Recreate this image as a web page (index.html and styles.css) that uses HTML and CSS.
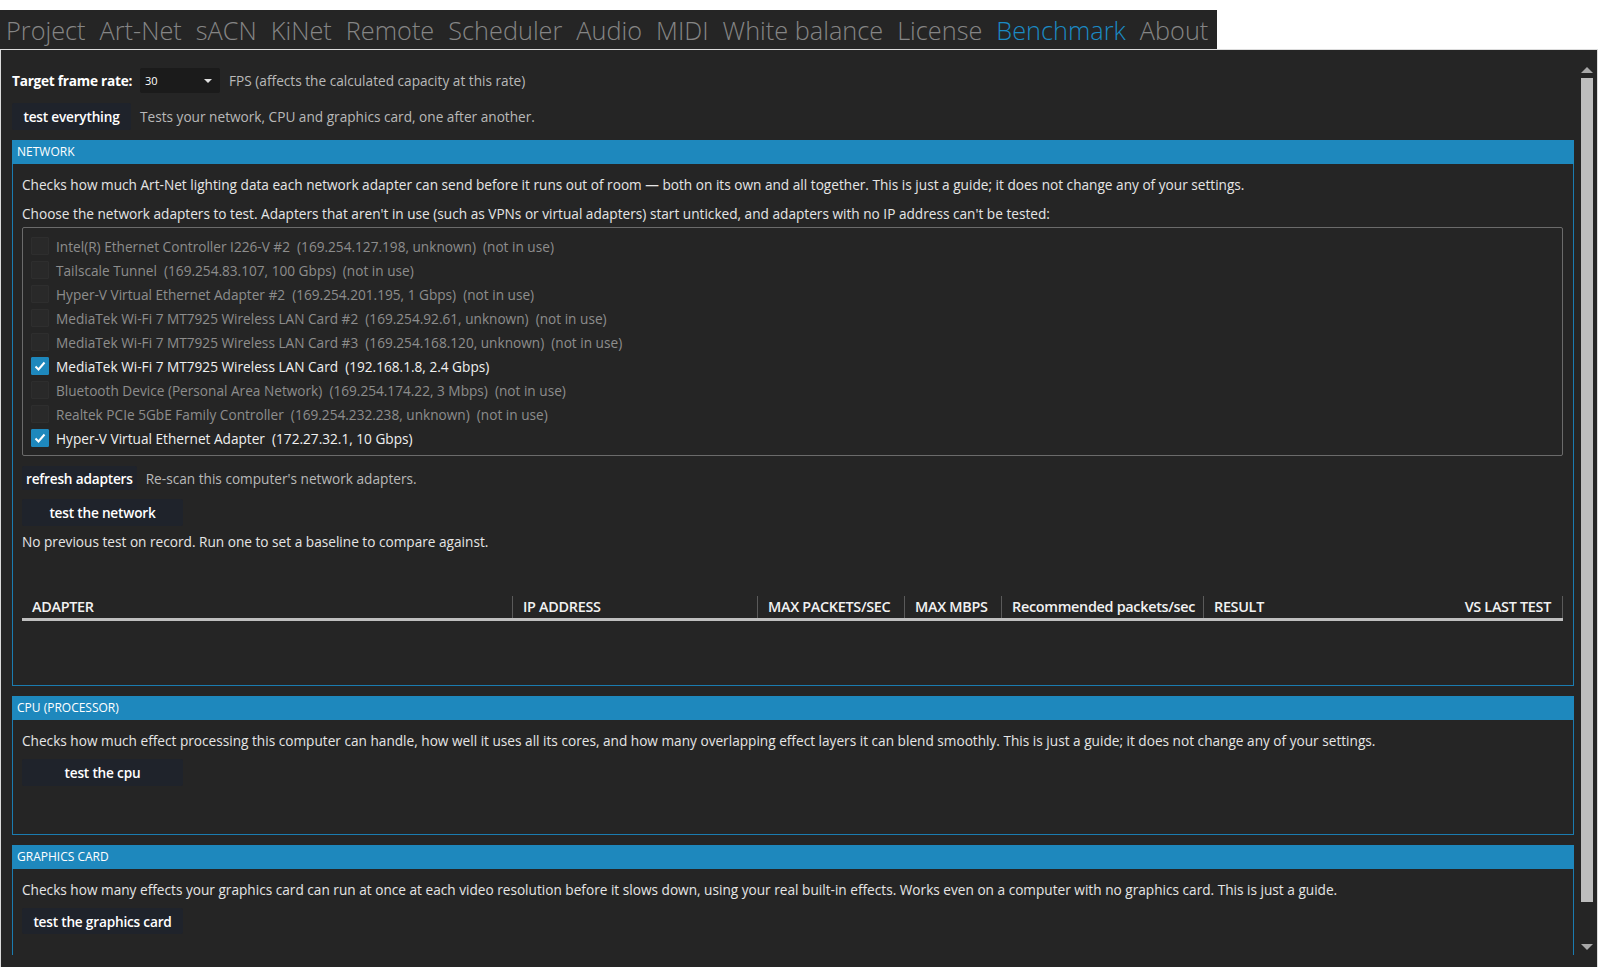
FILE: index.html
```html
<!DOCTYPE html>
<html lang="en">
<head>
    <meta charset="UTF-8">
    <title>Benchmark</title>
    <link rel="stylesheet" href="styles.css">
</head>
<body>
    <!-- tab strip -->
    <div class="tabs">
        <span class="tab">Project</span>
        <span class="tab">Art-Net</span>
        <span class="tab">sACN</span>
        <span class="tab">KiNet</span>
        <span class="tab">Remote</span>
        <span class="tab">Scheduler</span>
        <span class="tab">Audio</span>
        <span class="tab">MIDI</span>
        <span class="tab">White balance</span>
        <span class="tab">License</span>
        <span class="tab active">Benchmark</span>
        <span class="tab">About</span>
    </div>

    <div class="panel">
        <div class="scroller">
            <div class="row frame-row">
                <span class="label">Target frame rate:</span>
                <div class="combo">
                    <span>30</span>
                    <span class="combo-arrow"></span>
                </div>
                <span class="hint">FPS (affects the calculated capacity at this rate)</span>
            </div>

            <div class="row all-row">
                <button class="btn btn-all">test everything</button>
                <span class="hint">Tests your network, CPU and graphics card, one after another.</span>
            </div>

            <!-- network -->
            <div class="group">
                <div class="group-head">NETWORK</div>
                <div class="group-body network-body">
                    <p class="text">Checks how much Art-Net lighting data each network adapter can send before it runs out of room — both on its own and all together. This is just a guide; it does not change any of your settings.</p>
                    <p class="text text-second">Choose the network adapters to test. Adapters that aren't in use (such as VPNs or virtual adapters) start unticked, and adapters with no IP address can't be tested:</p>

                    <div class="adapters">
                        <div class="adapter off"><span class="check"></span>Intel(R) Ethernet Controller I226-V #2&nbsp; (169.254.127.198, unknown)&nbsp; (not in use)</div>
                        <div class="adapter off"><span class="check"></span>Tailscale Tunnel&nbsp; (169.254.83.107, 100 Gbps)&nbsp; (not in use)</div>
                        <div class="adapter off"><span class="check"></span>Hyper-V Virtual Ethernet Adapter #2&nbsp; (169.254.201.195, 1 Gbps)&nbsp; (not in use)</div>
                        <div class="adapter off"><span class="check"></span>MediaTek Wi-Fi 7 MT7925 Wireless LAN Card #2&nbsp; (169.254.92.61, unknown)&nbsp; (not in use)</div>
                        <div class="adapter off"><span class="check"></span>MediaTek Wi-Fi 7 MT7925 Wireless LAN Card #3&nbsp; (169.254.168.120, unknown)&nbsp; (not in use)</div>
                        <div class="adapter"><span class="check on"><svg viewBox="0 0 16 16" width="16" height="16"><polyline points="3.5,8.5 6.5,11.5 12.5,4.5" fill="none" stroke="#fff" stroke-width="2"/></svg></span>MediaTek Wi-Fi 7 MT7925 Wireless LAN Card&nbsp; (192.168.1.8, 2.4 Gbps)</div>
                        <div class="adapter off"><span class="check"></span>Bluetooth Device (Personal Area Network)&nbsp; (169.254.174.22, 3 Mbps)&nbsp; (not in use)</div>
                        <div class="adapter off"><span class="check"></span>Realtek PCIe 5GbE Family Controller&nbsp; (169.254.232.238, unknown)&nbsp; (not in use)</div>
                        <div class="adapter"><span class="check on"><svg viewBox="0 0 16 16" width="16" height="16"><polyline points="3.5,8.5 6.5,11.5 12.5,4.5" fill="none" stroke="#fff" stroke-width="2"/></svg></span>Hyper-V Virtual Ethernet Adapter&nbsp; (172.27.32.1, 10 Gbps)</div>
                    </div>

                    <div class="row refresh-row">
                        <button class="btn btn-refresh">refresh adapters</button>
                        <span class="hint">Re-scan this computer's network adapters.</span>
                    </div>

                    <button class="btn btn-test">test the network</button>
                    <p class="text status">No previous test on record. Run one to set a baseline to compare against.</p>

                    <div class="grid-head">
                        <div class="col c-adapter">ADAPTER</div>
                        <div class="col c-ip">IP ADDRESS</div>
                        <div class="col c-pps">MAX PACKETS/SEC</div>
                        <div class="col c-mbps">MAX MBPS</div>
                        <div class="col c-rec">Recommended packets/sec</div>
                        <div class="col c-result">RESULT</div>
                        <div class="col c-last">VS LAST TEST</div>
                    </div>
                </div>
            </div>

            <!-- cpu -->
            <div class="group">
                <div class="group-head">CPU (PROCESSOR)</div>
                <div class="group-body short-body">
                    <p class="text">Checks how much effect processing this computer can handle, how well it uses all its cores, and how many overlapping effect layers it can blend smoothly. This is just a guide; it does not change any of your settings.</p>
                    <button class="btn btn-test">test the cpu</button>
                </div>
            </div>

            <!-- graphics -->
            <div class="group">
                <div class="group-head">GRAPHICS CARD</div>
                <div class="group-body short-body">
                    <p class="text">Checks how many effects your graphics card can run at once at each video resolution before it slows down, using your real built-in effects. Works even on a computer with no graphics card. This is just a guide.</p>
                    <button class="btn btn-test btn-gpu">test the graphics card</button>
                </div>
            </div>
        </div>

        <div class="scrollbar">
            <span class="arrow up"></span>
            <div class="thumb"></div>
            <span class="arrow down"></span>
        </div>
    </div>
</body>
</html>
```

FILE: styles.css
```css
body {
    margin: 0;
    background-color: #ffffff;
    font-family: "Open Sans", "Noto Sans", sans-serif;
    font-size: 13.65px;
    color: #e6e6e6;
    overflow: hidden;
}

p {
    margin: 0;
}

/* tab strip */
.tabs {
    margin-top: 10px;
    width: 1217px;
    height: 39px;
    background-color: #252525;
    display: flex;
    align-items: center;
    gap: 14px;
    padding: 2px 0 0 6px;
    box-sizing: border-box;
}

.tab {
    font-size: 25.3px;
    font-weight: 300;
    color: #858585;
    line-height: 37px;
    white-space: nowrap;
}

.tab.active {
    color: #1b8ac4;
}

/* content panel */
.panel {
    height: 918px;
    border: 1px solid #dcdcdc;
    border-bottom: none;
    background-color: #252525;
    display: flex;
    box-sizing: border-box;
}

.scroller {
    flex: 1;
    padding: 18px 3px 0 11px;
    height: 905px;
    box-sizing: border-box;
    overflow: hidden;
}

.row {
    display: flex;
    align-items: center;
}

.label {
    font-weight: 700;
    color: #ffffff;
    letter-spacing: -0.25px;
    margin-right: 8px;
}

.hint {
    color: #b9b9b9;
    margin-left: 9px;
}

.combo {
    width: 80px;
    height: 25px;
    background-color: #1b1b1b;
    border-radius: 2px;
    display: flex;
    align-items: center;
    justify-content: space-between;
    padding: 0 8px 0 5px;
    box-sizing: border-box;
    font-size: 11px;
    color: #ffffff;
}

.combo-arrow {
    width: 0;
    height: 0;
    border-left: 4px solid transparent;
    border-right: 4px solid transparent;
    border-top: 4px solid #e0e0e0;
}

.all-row {
    margin-top: 10px;
}

.btn {
    background-color: #1f232b;
    border: none;
    border-radius: 2px;
    color: #ffffff;
    font-family: inherit;
    font-size: 13.65px;
    font-weight: 600;
    letter-spacing: -0.2px;
    padding: 0 9px;
    height: 27px;
    white-space: nowrap;
    cursor: pointer;
}

.btn-all {
    width: 119px;
    height: 27px;
    padding: 0;
}

/* group boxes */
.group {
    margin-top: 10px;
}

.group-head {
    height: 24px;
    background-color: #1e88bd;
    color: #ffffff;
    font-size: 12px;
    line-height: 24px;
    padding-left: 5px;
}

.group-body {
    border: 1px solid #1b7cb0;
    border-top: none;
    padding: 10px 10px 0 9px;
}

.text {
    line-height: 22px;
    white-space: nowrap;
}

.text-second {
    margin-top: 7px;
}

.adapters {
    margin-top: 2px;
    border: 1px solid #6b6b6b;
    border-radius: 2px;
    padding: 6px 8px 5px;
}

.adapter {
    height: 24px;
    display: flex;
    align-items: center;
    color: #f0f0f0;
    white-space: pre;
}

.adapter.off {
    color: #8d8d8d;
}

.check {
    width: 16px;
    height: 16px;
    background-color: #292929;
    border: 1px solid #2e2e2e;
    border-radius: 1px;
    margin-right: 7px;
    flex-shrink: 0;
    box-sizing: content-box;
}

.check.on {
    background-color: #1e88bd;
    border-color: #1e88bd;
}

.check svg {
    display: block;
}

.refresh-row {
    margin-top: 10px;
}

.btn-refresh {
    height: 24px;
    padding: 0 4px;
}

.btn-test {
    display: block;
    width: 161px;
    margin-top: 9px;
    padding: 0;
}

.status {
    margin-top: 5px;
}

/* result grid header */
.grid-head {
    display: flex;
    margin-top: 43px;
    margin-bottom: 64px;
    border-bottom: 3px solid #bfbfbf;
    font-size: 14.4px;
    font-weight: 600;
    letter-spacing: -0.3px;
    color: #f2f2f2;
}

.col {
    height: 22px;
    line-height: 22px;
    padding-left: 10px;
    border-right: 1px solid #5a5a5a;
    box-sizing: border-box;
    white-space: nowrap;
}

.c-adapter { width: 491px; }
.c-ip { width: 245px; }
.c-pps { width: 147px; }
.c-mbps { width: 97px; }
.c-rec { width: 202px; }
.c-result {
    flex: 1;
    border-right: none;
}
.c-last {
    text-align: right;
    padding-right: 11px;
}

.short-body {
    height: 115px;
    box-sizing: border-box;
}

.short-body .btn-test {
    margin-top: 7px;
}

.btn-gpu {
    height: 26px;
}

/* scrollbar */
.scrollbar {
    width: 20px;
    display: flex;
    flex-direction: column;
    align-items: center;
    padding-top: 17px;
}

.arrow {
    width: 0;
    height: 0;
    border-left: 6px solid transparent;
    border-right: 6px solid transparent;
}

.arrow.up {
    border-bottom: 6px solid #a8a8a8;
}

.arrow.down {
    border-top: 6px solid #a8a8a8;
    margin-top: 42px;
}

.thumb {
    width: 12px;
    height: 824px;
    margin-top: 5px;
    background-color: #bdbdbd;
}
```
